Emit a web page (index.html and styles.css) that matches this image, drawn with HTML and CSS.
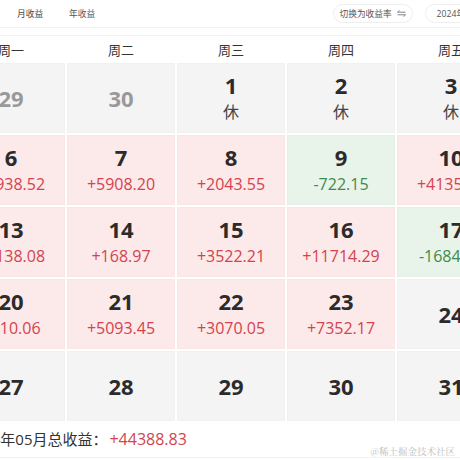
FILE: index.html
```html
<!DOCTYPE html>
<html lang="zh-CN">
<head>
<meta charset="utf-8">
<title>收益日历</title>
<link rel="stylesheet" href="styles.css">
</head>
<body>
<div class="page">
  <div class="toolbar">
    <div class="tabs">
      <span class="tab">月收益</span>
      <span class="tab active">年收益</span>
    </div>
    <div class="actions">
      <span class="pill">切换为收益率
        <svg class="swap" width="9" height="7" viewBox="0 0 9 7"><path d="M0.5 2.2H8.5M0.5 2.2L2.5 0.5M8.5 4.8H0.5M8.5 4.8L6.5 6.5" fill="none" stroke="#777" stroke-width="0.9"/></svg>
      </span>
      <span class="pill">2024年05月 ▾</span>
    </div>
  </div>

  <div class="cal">
    <div class="weekdays">
      <span>周一</span><span>周二</span><span>周三</span><span>周四</span><span>周五</span><span>周六</span><span>周日</span>
    </div>
    <div class="grid">
      <div class="cell other"><b>29</b></div>
      <div class="cell other"><b>30</b></div>
      <div class="cell rest"><b>1</b><i>休</i></div>
      <div class="cell rest"><b>2</b><i>休</i></div>
      <div class="cell rest"><b>3</b><i>休</i></div>
      <div class="cell rest"><b>4</b><i>休</i></div>
      <div class="cell rest"><b>5</b><i>休</i></div>

      <div class="cell up"><b>6</b><em>+1938.52</em></div>
      <div class="cell up"><b>7</b><em>+5908.20</em></div>
      <div class="cell up"><b>8</b><em>+2043.55</em></div>
      <div class="cell down"><b>9</b><em>-722.15</em></div>
      <div class="cell up"><b>10</b><em>+4135.62</em></div>
      <div class="cell"><b>11</b></div>
      <div class="cell"><b>12</b></div>

      <div class="cell up"><b>13</b><em>+1138.08</em></div>
      <div class="cell up"><b>14</b><em>+168.97</em></div>
      <div class="cell up"><b>15</b><em>+3522.21</em></div>
      <div class="cell up"><b>16</b><em>+11714.29</em></div>
      <div class="cell down"><b>17</b><em>-1684.19</em></div>
      <div class="cell"><b>18</b></div>
      <div class="cell"><b>19</b></div>

      <div class="cell up"><b>20</b><em>+710.06</em></div>
      <div class="cell up"><b>21</b><em>+5093.45</em></div>
      <div class="cell up"><b>22</b><em>+3070.05</em></div>
      <div class="cell up"><b>23</b><em>+7352.17</em></div>
      <div class="cell"><b>24</b></div>
      <div class="cell"><b>25</b></div>
      <div class="cell"><b>26</b></div>

      <div class="cell"><b>27</b></div>
      <div class="cell"><b>28</b></div>
      <div class="cell"><b>29</b></div>
      <div class="cell"><b>30</b></div>
      <div class="cell"><b>31</b></div>
      <div class="cell other"><b>1</b></div>
      <div class="cell other"><b>2</b></div>
    </div>
    <div class="summary">2024年05月总收益：<span class="total">+44388.83</span></div>
  </div>
  <div class="watermark">@稀土掘金技术社区</div>
</div>
</body>
</html>
```

FILE: styles.css
```css
* { box-sizing: border-box; }
html, body {
  margin: 0;
  padding: 0;
  background: #fff;
}
body {
  width: 460px;
  height: 460px;
  overflow: hidden;
  font-family: "Open Sans", "Noto Sans CJK SC", sans-serif;
  color: #333;
}
.page {
  position: relative;
  width: 460px;
  height: 460px;
  overflow: hidden;
}
.toolbar {
  display: flex;
  align-items: center;
  width: 520px;
  height: 28px;
  padding: 0 17px 1px 17px;
  border-bottom: 1px solid #f3f3f3;
}
.tabs {
  display: flex;
  gap: 26px;
  font-size: 8.7px;
  color: #444;
}
.tab.active { color: #555; }
.actions {
  margin-left: auto;
  display: flex;
  gap: 12px;
}
.pill {
  display: inline-flex;
  align-items: center;
  gap: 5px;
  height: 19px;
  padding: 0 11px;
  border: 1px solid #eee;
  border-radius: 10px;
  font-size: 8.7px;
  color: #555;
  white-space: nowrap;
}
.pill:first-child { width: 80px; justify-content: center; padding: 0; }
.cal {
  margin-left: -43px;
  width: 768px;
}
.weekdays {
  display: grid;
  grid-template-columns: repeat(7, 108px);
  column-gap: 2px;
  margin-top: 7px;
  height: 27px;
  border-top: 1px solid #f3f3f3;
  align-items: center;
  font-size: 13px;
  color: #333;
  text-align: center;
}
.grid {
  display: grid;
  grid-template-columns: repeat(7, 108px);
  grid-auto-rows: 70px;
  gap: 2px;
  margin-top: 1px;
}
.cell {
  display: flex;
  flex-direction: column;
  align-items: center;
  justify-content: center;
  padding-top: 1px;
  background: #f4f4f4;
  border: 1px solid #f1f1f1;
}
.cell b {
  font-size: 22px;
  font-weight: 700;
  line-height: 27px;
  color: #2b2b2b;
}
.cell i, .cell em {
  font-style: normal;
  line-height: 27px;
}
.cell i {
  font-size: 16px;
  color: #444;
}
.cell em {
  font-size: 16px;
}
.cell.other b { color: #999; }
.cell.up { background: #fce9e9; border-color: #fbe4e4; }
.cell.up em { color: #d4434e; }
.cell.down { background: #e8f3e9; border-color: #e4f0e5; }
.cell.down em { color: #3f8b4c; }
.summary {
  padding: 7px 0 0 9px;
  height: 37px;
  line-height: 22px;
  font-size: 15px;
  color: #333;
  border-bottom: 1px solid #f3f3f3;
}
.total {
  color: #d4434e;
  font-size: 16px;
  margin-left: 2px;
}
.watermark {
  position: absolute;
  right: 5px;
  bottom: 2px;
  font-family: "Noto Serif CJK SC", "Noto Sans CJK SC", serif;
  font-size: 9.5px;
  color: #bdbdbd;
}
```
